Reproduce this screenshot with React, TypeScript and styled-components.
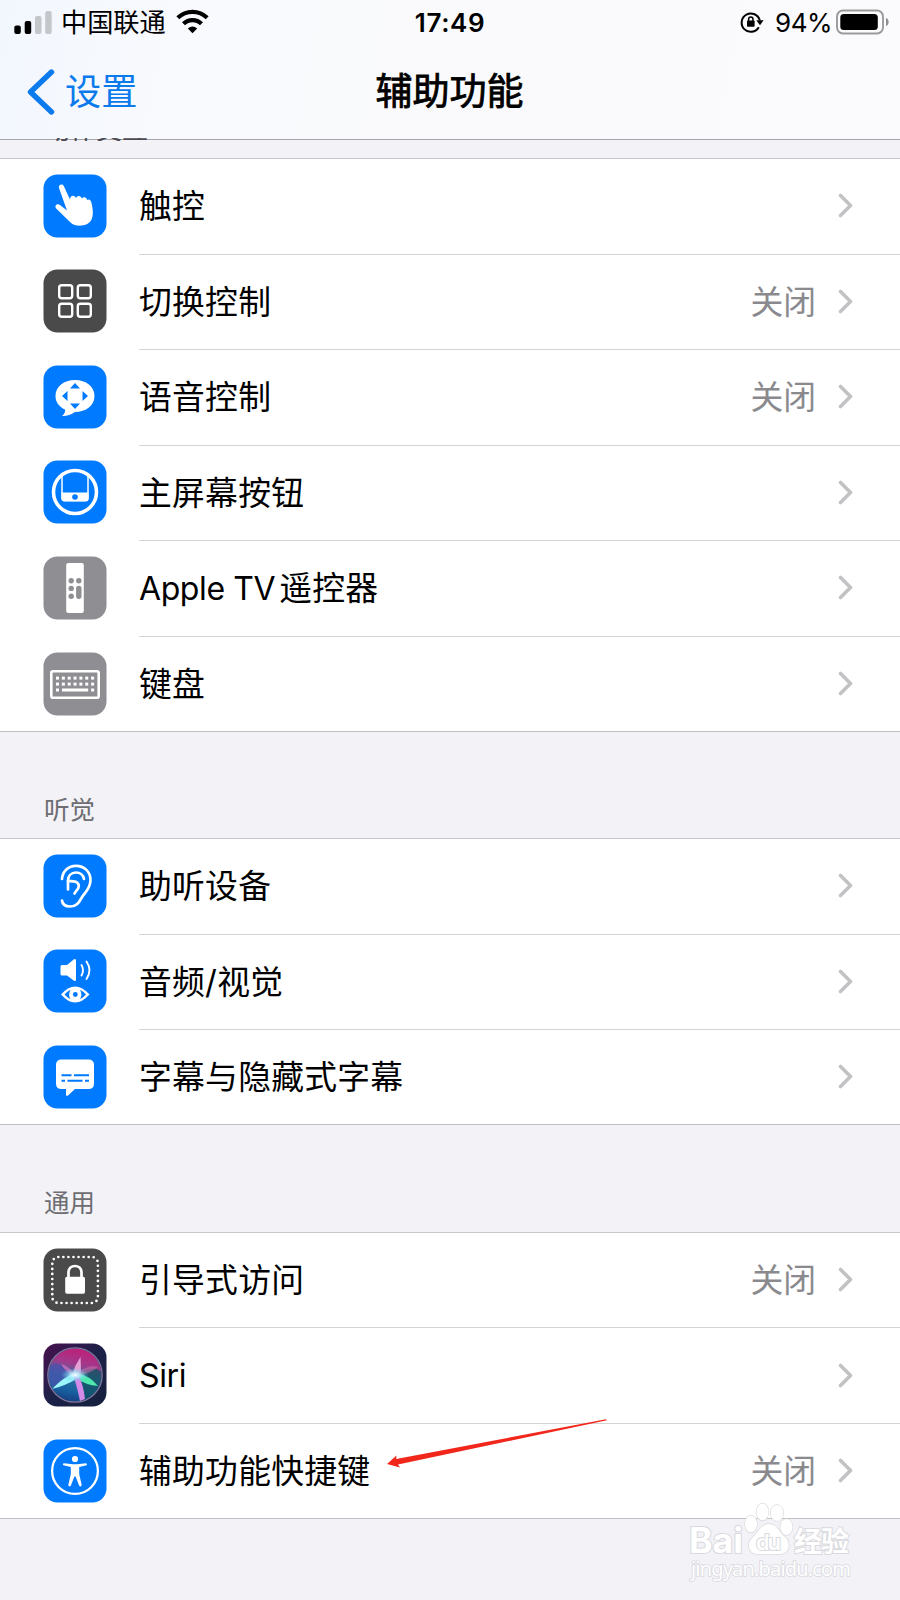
import React from "react";
import styled, { createGlobalStyle } from "styled-components";

const Global = createGlobalStyle`
  * { box-sizing: border-box; }
  body {
    margin: 0;
    background: #f2f2f7;
    font-family: Inter, "Noto Sans CJK SC", sans-serif;
    color: #000;
  }
`;

const Screen = styled.main`
  width: 900px;
  height: 1600px;
  overflow: hidden;
  background: #f2f2f7;
  display: flex;
  flex-direction: column;
`;

const Header = styled.header`
  height: 140px;
  flex: none;
  border-bottom: 1px solid #a5a5aa;
  background: linear-gradient(100deg, #f2f7fe 0%, #f9fafd 22%, #fbfafc 100%);
  position: relative;
`;

const StatusBar = styled.div`
  height: 46px;
  display: grid;
  grid-template-columns: 1fr auto 1fr;
  align-items: center;
  padding: 0 11px 0 14px;
`;

const StatusSide = styled.div<{ $end?: boolean }>`
  display: flex;
  align-items: center;
  justify-content: ${(p) => (p.$end ? "flex-end" : "flex-start")};
`;

const Carrier = styled.span`
  font-size: 26.2px;
  line-height: 46px;
  margin: 0 10px 0 9px;
`;

const Clock = styled.span`
  font-size: 26px;
  font-weight: 600;
  letter-spacing: 0.6px;
  margin: 0 3px 2px 0;
`;

const Percent = styled.span`
  font-size: 26px;
  margin: 0 4px 1px 11px;
  letter-spacing: -0.5px;
`;

const NavBar = styled.div`
  height: 92px;
  display: grid;
  grid-template-columns: 1fr auto 1fr;
  align-items: center;
  padding: 0 28px 0 27px;
`;

const Back = styled.a`
  display: flex;
  align-items: center;
  gap: 10px;
  color: #0a7aec;
  font-size: 36.2px;
  line-height: 60px;
`;

const Title = styled.h1`
  margin: 0;
  font-size: 37px;
  line-height: 60px;
  font-weight: 400;
  -webkit-text-stroke: 0.8px #000;
`;

const Strip = styled.div`
  height: 18px;
  flex: none;
`;

const HiddenHeading = styled.div`
  position: absolute;
  left: 44px;
  bottom: -2px;
  height: 3px;
  overflow: hidden;
  display: flex;
  align-items: flex-end;
  font-size: 26px;
  line-height: 23px;
  color: #4c4a52;
`;

const SectionTitle = styled.h2`
  margin: 0;
  height: 106.5px;
  flex: none;
  padding: 59px 44px 0;
  font-size: 25.5px;
  line-height: 38px;
  font-weight: 400;
  color: #6d6d72;
`;

const Group = styled.section`
  flex: none;
  background: #fff;
  border-top: 1px solid #c8c8cc;
  border-bottom: 1px solid #c0c0c4;
`;

const Row = styled.div`
  height: 95.5px;
  display: flex;
  padding-left: 43px;
  &:last-child { height: 94.2px; }
`;

const IconBox = styled.div`
  width: 96px;
  display: flex;
  align-items: center;
  padding-bottom: 2px;
  ${Row}:last-child & { padding-bottom: 0; }
  svg { display: block; }
`;

const RowBody = styled.div<{ $last?: boolean }>`
  flex: 1;
  display: flex;
  align-items: center;
  border-bottom: ${(p) => (p.$last ? "none" : "1px solid #d3d3d6")};
  padding: 0 46px 0 0;
`;

const Label = styled.span`
  flex: 1;
  font-size: 32.8px;
  line-height: 48px;
  letter-spacing: 0.25px;
`;

const Latin = styled.span<{ $gap: number }>`
  font-size: 32px;
  letter-spacing: -0.4px;
  margin-right: ${(p) => p.$gap}px;
`;

const Value = styled.span`
  font-size: 32.8px;
  line-height: 48px;
  color: #8a8a8e;
  margin-right: 22px;
`;

const Arrow = styled.svg`
  position: absolute;
  left: 386px;
  top: 1418px;
`;

const Watermark = styled.svg`
  position: absolute;
  left: 680px;
  top: 1499px;
`;

const Chevron = () => (
  <svg width="16" height="26" viewBox="0 0 16 26" fill="none" stroke="#c2c2c5" strokeWidth="3.6" strokeLinecap="round" strokeLinejoin="round">
    <path d="M2.5 2.5 12.5 12.5 2.5 22.500" />
  </svg>
);

const tones = { blue: "#007aff", dark: "#4a4a4a", gray: "#8e8e93" };

const Tile = ({ tone, children }: { tone: keyof typeof tones; children: React.ReactNode }) => (
  <svg width="64" height="64" viewBox="0 0 64 64" fill="none">
    <rect x="0.5" y="0.5" width="63" height="63" rx="14" fill={tones[tone]} />
    {children}
  </svg>
);

const TouchIcon = () => (
  <Tile tone="blue">
    <path fill="#fff" d="M16 14C15 10.600 19.600 9.200 21 12.400L27 25.500C27 21 31.500 20.600 33 24C34 21 38 21.200 39 24.600C40.500 22.200 43.500 23 44.200 26C46 24.500 48 26 48.500 29C50 36 50.800 42 48 46.500C44 52.500 33 53.500 27.500 48.500L13.200 34.500C11 31.800 14.200 29 17 31L24 36.500Z" />
  </Tile>
);

const SwitchIcon = () => (
  <Tile tone="dark">
    <g stroke="#fff" strokeWidth="2.400">
      <rect x="16.200" y="16.200" width="13" height="13" rx="2.500" />
      <rect x="34.800" y="16.200" width="13" height="13" rx="2.500" />
      <rect x="16.200" y="34.800" width="13" height="13" rx="2.500" />
      <rect x="34.800" y="34.800" width="13" height="13" rx="2.500" />
    </g>
  </Tile>
);

const VoiceIcon = () => (
  <Tile tone="blue">
    <path fill="#fff" d="M32 15C43 15 51.500 21.500 51.500 31C51.500 40.500 43 47 32 47C28 50 23 51.300 19 51C21.500 49 22.500 46.500 22 44.500C16 41.800 12.500 37 12.500 31C12.500 21.500 21 15 32 15Z" />
    <path fill="#007aff" d="M32 18 37 23.500H27ZM32 44 37 38.500H27ZM19 31 24.500 26V36ZM45 31 39.500 26V36Z" />
  </Tile>
);

const HomeIcon = () => (
  <Tile tone="blue">
    <circle cx="32" cy="32" r="21.500" stroke="#fff" strokeWidth="3.600" />
    <path d="M19 16V38Q19 40.500 21.500 40.500H42.500Q45 40.500 45 38V16" stroke="#fff" strokeWidth="1.500" />
    <path d="M18.500 32.500H45.500V38.500Q45.500 41.500 42.500 41.500H21.500Q18.500 41.500 18.500 38.500Z" fill="#fff" />
    <circle cx="32" cy="37" r="2.800" fill="#007aff" />
  </Tile>
);

const RemoteIcon = () => (
  <Tile tone="gray">
    <rect x="23.200" y="7" width="17.600" height="50" rx="2" fill="#fff" />
    <g fill="#8e8e93">
      <circle cx="28.200" cy="24.800" r="2.700" />
      <circle cx="35.800" cy="24.800" r="2.700" />
      <circle cx="28.200" cy="32.400" r="2.700" />
      <circle cx="28.200" cy="40.200" r="2.700" />
      <rect x="33.100" y="29.700" width="5.400" height="13.200" rx="2.700" />
    </g>
  </Tile>
);

const KeyboardIcon = () => (
  <Tile tone="gray">
    <rect x="8.300" y="19.300" width="47.400" height="26.400" rx="1.800" stroke="#fff" strokeWidth="2.600" />
    <g fill="#fff">
      {[0, 1, 2, 3, 4, 5, 6].map((i) => (
        <React.Fragment key={i}>
          <rect x={13 + i * 5.85} y="24.600" width="3" height="3" />
          <rect x={13 + i * 5.85} y="30.600" width="3" height="3" />
        </React.Fragment>
      ))}
      <rect x="13" y="36.500" width="3" height="3" />
      <rect x="19" y="36.500" width="26.200" height="3" />
      <rect x="48.100" y="36.500" width="3" height="3" />
    </g>
  </Tile>
);

const EarIcon = () => (
  <Tile tone="blue">
    <g stroke="#fff" strokeWidth="2.700" strokeLinecap="round" strokeLinejoin="round">
      <path d="M19 25C19.500 17 25.500 11.800 33 11.800C41.500 11.800 47.500 18 47.500 26C47.500 35 42 38 38.500 44C36 48.500 33.500 52.500 27 52.500C22.500 52.500 19.500 50.500 19 46.500" />
      <path d="M41 25C40 20.500 37 18.500 33 18.500C28 18.500 25 22 25 26.500V35.500" />
      <path d="M25 27.200C31 26.500 35.800 28 35.800 32C35.800 35.500 32.500 37 31.500 39.500" />
    </g>
  </Tile>
);

const AudioVisualIcon = () => (
  <Tile tone="blue">
    <path fill="#fff" d="M17.500 17.500Q17.500 16 19 16H24L31 10.200Q33 9.200 33 11.500V30.500Q33 32.800 31 31.800L24 26.500H19Q17.500 26.500 17.500 25Z" />
    <g stroke="#fff" strokeWidth="1.900" strokeLinecap="round">
      <path d="M38.500 16Q41.500 21.200 38.500 26.500M43.500 12.500Q49.500 21.200 43.500 30" />
    </g>
    <path fill="#fff" d="M18 45.500Q32 29.500 46.500 45.500Q32 61.500 18 45.500Z" />
    <path fill="#007aff" d="M21.500 45.500Q24 42.500 27.500 40.700Q24.800 45.500 27.500 50.300Q24 48.500 21.500 45.500ZM43 45.500Q40.500 42.500 37 40.700Q39.700 45.500 37 50.300Q40.500 48.500 43 45.500Z" />
    <circle cx="32.300" cy="45.500" r="2.400" fill="#007aff" />
  </Tile>
);

const CaptionIcon = () => (
  <Tile tone="blue">
    <path fill="#fff" d="M18.500 14.500H45.500Q51 14.500 51 20V38.500Q51 44 45.500 44H32L25 50.500Q23 51.800 23 49.500V44H18.500Q13 44 13 38.500V20Q13 14.500 18.500 14.500Z" />
    <path d="M18.500 30.300H28.500M31 30.300H46M18.500 35.700H22M24.500 35.700H39.500M42 35.700H46" stroke="#007aff" strokeWidth="2" />
  </Tile>
);

const GuidedIcon = () => (
  <Tile tone="dark">
    <rect x="9.300" y="9" width="45.600" height="46" rx="6" stroke="#fff" strokeWidth="2.700" strokeLinecap="round" strokeDasharray="0 5.060" />
    <path d="M25.500 30V24.500C25.500 15.800 38.500 15.800 38.500 24.500V30" stroke="#fff" strokeWidth="2.700" />
    <rect x="22.200" y="28.700" width="19.800" height="17" rx="1.800" fill="#fff" />
  </Tile>
);

const SiriIcon = () => (
  <svg width="64" height="64" viewBox="0 0 64 64" fill="none">
    <defs>
      <linearGradient id="siriBase" x1="0" y1="0" x2="1" y2="1">
        <stop offset="0" stopColor="#48104f" />
        <stop offset="0.500" stopColor="#1c2148" />
        <stop offset="1" stopColor="#15203c" />
      </linearGradient>
      <linearGradient id="siriOrb" x1="0.600" y1="0" x2="0.400" y2="1">
        <stop offset="0" stopColor="#c21d78" />
        <stop offset="0.300" stopColor="#a03a8c" />
        <stop offset="0.530" stopColor="#2b74a0" />
        <stop offset="0.800" stopColor="#1860a0" />
        <stop offset="1" stopColor="#173f83" />
      </linearGradient>
      <radialGradient id="siriGlow">
        <stop offset="0" stopColor="#fff" />
        <stop offset="0.300" stopColor="#b9f5ff" stopOpacity="0.850" />
        <stop offset="1" stopColor="#4fc6ea" stopOpacity="0" />
      </radialGradient>
      <filter id="siriSoft"><feGaussianBlur stdDeviation="0.700" /></filter>
      <clipPath id="siriClip"><circle cx="32" cy="32" r="26.500" /></clipPath>
    </defs>
    <rect x="0.500" y="0.500" width="63" height="63" rx="14" fill="url(#siriBase)" />
    <g clipPath="url(#siriClip)">
      <circle cx="32" cy="32" r="27" fill="url(#siriOrb)" />
      <g filter="url(#siriSoft)">
        <path d="M34 32Q52 20 59 30Q60 46 46 57L37 60Q37 44 34 32Z" fill="#16505f" fillOpacity="0.750" />
        <path d="M32 32Q14 14 5 25Q5 38 11 45Z" fill="#4a4fae" fillOpacity="0.700" />
        <path d="M33 29Q47 33 55 43Q43 42 32 35Z" fill="#4fe8ae" />
        <path d="M34 29Q20 34 9 46Q22 43 35 35Z" fill="#9cf6fa" />
        <path d="M30 32Q34 43 37 58L42 56Q40.500 42 35 31Z" fill="#d48ae8" />
        <path d="M29 32Q32 22 37.500 14Q38 23 38 32Z" fill="#eba5da" fillOpacity="0.950" />
        <path d="M32 31Q24 22 18 21Q23 30 32 33Z" fill="#dc74c0" fillOpacity="0.700" />
        <path d="M34 31Q44 21 55 24Q50 29 35 33Z" fill="#c46bab" fillOpacity="0.600" />
      </g>
      <ellipse cx="32" cy="32" rx="14" ry="7" fill="url(#siriGlow)" />
    </g>
    <circle cx="32" cy="32" r="27.200" stroke="#8f86ad" strokeWidth="1.300" strokeOpacity="0.850" />
  </svg>
);

const AccessibilityIcon = () => (
  <Tile tone="blue">
    <circle cx="32" cy="32" r="22.900" stroke="#fff" strokeWidth="2.300" />
    <circle cx="32" cy="20" r="3.100" fill="#fff" />
    <path fill="#fff" d="M21 24.200 30 25.300H34L43 24.200Q44.800 24.500 43.600 26.300L36.200 28V35L38.700 46Q38.300 48.300 36.300 47L32.600 37.500H31.400L27.700 47Q25.700 48.300 25.300 46L27.800 35V28L20.400 26.300Q19.200 24.500 21 24.200Z" />
  </Tile>
);

type Item = { latin?: string; label?: string; icon: React.FC; value?: string };

const motion: Item[] = [
  { label: "触控", icon: TouchIcon },
  { label: "切换控制", icon: SwitchIcon, value: "关闭" },
  { label: "语音控制", icon: VoiceIcon, value: "关闭" },
  { label: "主屏幕按钮", icon: HomeIcon },
  { latin: "Apple TV", label: "遥控器", icon: RemoteIcon },
  { label: "键盘", icon: KeyboardIcon },
];

const hearing: Item[] = [
  { label: "助听设备", icon: EarIcon },
  { label: "音频/视觉", icon: AudioVisualIcon },
  { label: "字幕与隐藏式字幕", icon: CaptionIcon },
];

const general: Item[] = [
  { label: "引导式访问", icon: GuidedIcon, value: "关闭" },
  { latin: "Siri", icon: SiriIcon },
  { label: "辅助功能快捷键", icon: AccessibilityIcon, value: "关闭" },
];

const List = ({ items }: { items: Item[] }) => (
  <Group>
    {items.map(({ latin, label, icon: Icon, value }, i) => (
      <Row key={i}>
        <IconBox><Icon /></IconBox>
        <RowBody $last={i === items.length - 1}>
          <Label>
            {latin && <Latin $gap={label ? 4 : 0}>{latin}</Latin>}
            {label}
          </Label>
          {value && <Value>{value}</Value>}
          <Chevron />
        </RowBody>
      </Row>
    ))}
  </Group>
);

const Signal = () => (
  <svg width="38" height="26" viewBox="0 0 38 26">
    <rect x="0.300" y="15.500" width="6.500" height="8.500" rx="2" />
    <rect x="10.700" y="11" width="6.500" height="13" rx="2" />
    <rect x="21" y="6" width="6.500" height="18" rx="2" fill="#c4c7ca" />
    <rect x="31.200" y="1" width="6.500" height="23" rx="2" fill="#c4c7ca" />
  </svg>
);

const Wifi = () => (
  <svg width="33" height="28" viewBox="0 0 33 28" fill="none" stroke="#000" strokeWidth="4.200">
    <path d="M1.800 8.800C10 0.800 23 0.800 31.200 8.800" />
    <path d="M7.500 14.800C12.500 9.800 20.500 9.800 25.500 14.800" />
    <path d="M16.500 24.300 11.800 19.500Q16.500 15.500 21.200 19.500Z" fill="#000" stroke="none" />
  </svg>
);

const RotationLock = () => (
  <svg width="24" height="24" viewBox="0 0 24 24" fill="none">
    <path d="M18.800 16.300A9.200 9.200 0 1 1 19.800 9.500" stroke="#000" strokeWidth="2" />
    <path d="M16.300 9.300H23.600L20 14.200Z" fill="#000" />
    <rect x="7" y="9.500" width="7.600" height="6.300" rx="0.800" fill="#000" />
    <path d="M8.600 10V8.300C8.600 5.300 13 5.300 13 8.300V10" stroke="#000" strokeWidth="1.500" />
  </svg>
);

const Battery = () => (
  <svg width="53" height="28" viewBox="0 0 53 28" fill="none">
    <rect x="1" y="1.500" width="46" height="23" rx="6" stroke="#9b9b9b" strokeWidth="1.900" />
    <rect x="4.300" y="5" width="37.500" height="16" rx="3.500" fill="#000" />
    <path d="M50 9C53.500 10 53.500 16 50 17Z" fill="#8f8f8f" />
  </svg>
);

export default function App() {
  return (
    <>
      <Global />
      <Screen>
        <Header>
          <StatusBar>
            <StatusSide><Signal /><Carrier>中国联通</Carrier><Wifi /></StatusSide>
            <Clock>17:49</Clock>
            <StatusSide $end><RotationLock /><Percent>94%</Percent><Battery /></StatusSide>
          </StatusBar>
          <NavBar>
            <Back>
              <svg width="28" height="46" viewBox="0 0 28 46" fill="none" stroke="#0a7aec" strokeWidth="5.400" strokeLinecap="round" strokeLinejoin="round">
                <path d="M24.500 3 3.500 23 24.500 43" />
              </svg>
              设置
            </Back>
            <Title>辅助功能</Title>
            <span />
          </NavBar>
          <HiddenHeading>动作交互</HiddenHeading>
        </Header>
        <Strip />
        <List items={motion} />
        <SectionTitle>听觉</SectionTitle>
        <List items={hearing} />
        <SectionTitle>通用</SectionTitle>
        <List items={general} />
        <Arrow width="222" height="52" viewBox="0 0 222 52">
          <path d="M1 46 10.500 37.500 10.200 41 220 1.200 221 2.200 12 46.500 14 49.500Z" fill="#f2271c" />
        </Arrow>
        <Watermark width="180" height="84" viewBox="0 0 180 84" fill="#fff" stroke="#d9d9de" strokeWidth="2" paintOrder="stroke">
          <g fontFamily="Inter, 'Noto Sans CJK SC', sans-serif" fontWeight="700">
            <text x="9" y="54" fontSize="35" textLength="54" lengthAdjust="spacingAndGlyphs">Bai</text>
            <text x="114" y="53" fontSize="28" textLength="55">经验</text>
          </g>
          <g strokeWidth="1.300">
            <ellipse cx="71" cy="25" rx="6" ry="8.500" />
            <ellipse cx="82.500" cy="13" rx="6" ry="8.500" />
            <ellipse cx="97" cy="14" rx="6.300" ry="8" />
            <ellipse cx="106.500" cy="28" rx="6" ry="8" />
            <path d="M89 25C97 25 99 33 105 38C111 43 110 55 100 55H78C68 55 66 44 73 38C79 33 81 25 89 25Z" />
          </g>
          <text x="76" y="51" fontFamily="Inter, sans-serif" fontSize="22" fontWeight="600" textLength="25">du</text>
          <text x="11" y="77" fontFamily="'Noto Sans', sans-serif" fontSize="20" strokeWidth="1.600" textLength="160">jingyan.baidu.com</text>
        </Watermark>
      </Screen>
    </>
  );
}
